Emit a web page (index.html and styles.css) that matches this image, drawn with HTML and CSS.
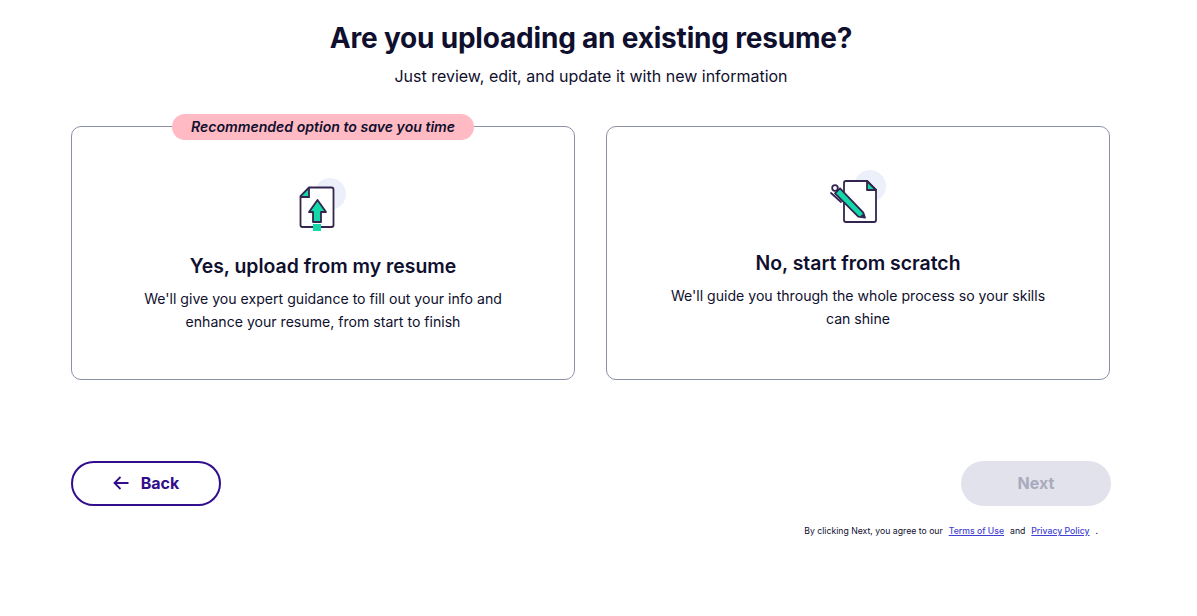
FILE: index.html
```html
<!DOCTYPE html>
<html lang="en">
<head>
  <meta charset="UTF-8" />
  <title>Resume options</title>
  <link rel="stylesheet" href="styles.css">
</head>
<body>
  <main class="page">
    <h1>Are you uploading an existing resume?</h1>
    <p class="subtitle">Just review, edit, and update it with new information</p>

    <div class="options">
      <div class="card card-upload">
        <span class="badge">Recommended option to save you time</span>
        <svg class="card-icon" width="60" height="60" viewBox="0 0 60 60">
          <circle cx="37" cy="18" r="16" fill="#ecf0fa"/>
          <path d="M16 11.500H38.500a2 2 0 0 1 2 2V49a2 2 0 0 1-2 2H9.500a2 2 0 0 1-2-2V21Z" fill="#fff"/>
          <path d="M7.500 21H16V11.500Z" fill="#14d8a8"/>
          <path d="M28 51H38.500a2 2 0 0 0 2-2V13.500a2 2 0 0 0-2-2H16L7.500 20V49a2 2 0 0 0 2 2H20" fill="none" stroke="#33254f" stroke-width="1.800"/>
          <path d="M7.500 21H16V11.500" fill="none" stroke="#33254f" stroke-width="1.800"/>
          <path d="M24.500 24L33 36H28V46H20V36H16Z" fill="#14d8a8" stroke="#33254f" stroke-width="1.800" stroke-linejoin="round"/>
          <path d="M20 48H28V55H20Z" fill="#14d8a8"/>
        </svg>
        <h2>Yes, upload from my resume</h2>
        <p>We'll give you expert guidance to fill out your info and enhance your resume, from start to finish</p>
      </div>

      <div class="card">
        <svg class="card-icon" width="60" height="63" viewBox="0 0 60 63">
          <circle cx="42" cy="16" r="16" fill="#ecf0fa"/>
          <path d="M18 11H39L48 20V50a2 2 0 0 1-2 2H18a2 2 0 0 1-2-2V13a2 2 0 0 1 2-2Z" fill="#fff" stroke="#33254f" stroke-width="1.800" stroke-linejoin="round"/>
          <path d="M39 11V20H48Z" fill="#14d8a8" stroke="#33254f" stroke-width="1.800" stroke-linejoin="round"/>
          <path d="M7 23.300L12 18.300L35.300 42.700L37 47.700L30.300 46.700Z" fill="#14d8a8" stroke="#33254f" stroke-width="1.800" stroke-linejoin="round"/>
          <path d="M32.500 46L36 43L37 47.700Z" fill="#33254f"/>
          <circle cx="7" cy="18" r="2.800" fill="#fff" stroke="#33254f" stroke-width="1.800"/>
          <path d="M3 23L13 32" fill="none" stroke="#33254f" stroke-width="1.800" stroke-linecap="round"/>
        </svg>
        <h2>No, start from scratch</h2>
        <p>We'll guide you through the whole process so your skills can shine</p>
      </div>
    </div>

    <div class="actions">
      <button class="btn btn-back">
        <svg width="16" height="14" viewBox="0 0 16 14"><path d="M15.500 7H1.500M7.500 1L1.500 7L7.500 13" fill="none" stroke="#330e8c" stroke-width="1.800"/></svg>
        Back
      </button>
      <button class="btn btn-next" disabled>Next</button>
    </div>

    <p class="legal">By clicking Next, you agree to our <a href="#">Terms of Use</a> and <a href="#">Privacy Policy</a> .</p>
  </main>
</body>
</html>
```

FILE: styles.css
```css
body {
  margin: 0;
  background-color: #fff;
  color: #0f0f2e;
  font-family: Inter, "Liberation Sans", sans-serif;
}

.page {
  width: 1040px;
  margin-left: 71px;
  padding-top: 20px;
}

h1 {
  margin: 0;
  text-align: center;
  font-size: 28px;
  line-height: 36px;
  font-weight: 700;
  letter-spacing: -0.2px;
}

.subtitle {
  margin: 9px 0 0;
  text-align: center;
  font-size: 16px;
  line-height: 22px;
}

.options {
  display: flex;
  gap: 31px;
  margin-top: 39px;
}

.card {
  position: relative;
  box-sizing: border-box;
  width: 504px;
  height: 254px;
  border: 1px solid #8b90a6;
  border-radius: 10px;
  padding-top: 43px;
  text-align: center;
}

.card-upload {
  padding-top: 49px;
}

.card-icon {
  display: block;
  margin: 0 auto;
}

.badge {
  position: absolute;
  top: -13px;
  left: 100px;
  width: 302px;
  height: 26px;
  border-radius: 13px;
  background-color: #ffbac3;
  font-size: 14.100px;
  line-height: 26px;
  font-weight: 600;
  font-style: italic;
}

h2 {
  margin: 16px 0 0;
  font-size: 19.400px;
  line-height: 28px;
  font-weight: 600;
}

.card p {
  width: 390px;
  margin: 7px auto 0;
  font-size: 14.100px;
  line-height: 23px;
}

.actions {
  display: flex;
  justify-content: space-between;
  margin-top: 81px;
}

.btn {
  display: flex;
  align-items: center;
  justify-content: center;
  gap: 12px;
  box-sizing: border-box;
  width: 150px;
  height: 45px;
  padding-bottom: 2px;
  border-radius: 23px;
  font-family: inherit;
  font-size: 16px;
  font-weight: 700;
}

.btn-back {
  border: 2px solid #330e8c;
  background-color: #fff;
  color: #330e8c;
}

.btn-next {
  border: none;
  background-color: #e1e2ec;
  color: #a9abbd;
}

.legal {
  margin: 19px 13px 0 0;
  text-align: right;
  font-size: 8.700px;
  line-height: 12px;
}

.legal a {
  margin: 0 3.500px;
  color: #3f3fd1;
  font-weight: 500;
}
```
